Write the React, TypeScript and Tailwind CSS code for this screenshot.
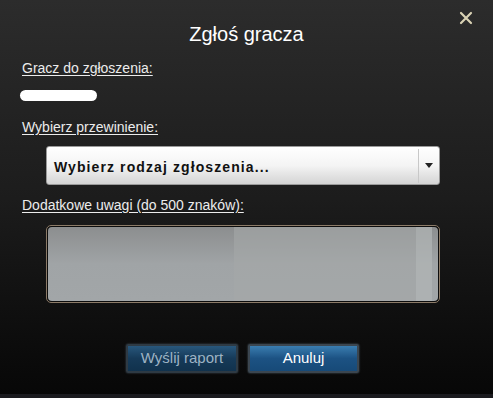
export default function App() {
  return (
    <div
      className="relative w-[493px] h-[398px] overflow-hidden bg-gradient-to-b from-[#2c2c2c] via-[#1c1c1c] to-[#070707] text-[#ececec]"
      style={{ fontFamily: '"Liberation Sans", Arial, sans-serif' }}
    >
      {/* Close */}
      <button className="absolute left-[458px] top-[10px] w-[16px] h-[16px] flex items-center justify-center">
        <svg width="14" height="14" viewBox="0 0 14 14">
          <path d="M2 2 L12 12 M12 2 L2 12" stroke="#d9d2b4" strokeWidth="2.2" strokeLinecap="round" />
        </svg>
      </button>

      <div className="flex flex-col h-[394px]">
        <h1 className="pt-[22px] text-center text-[20px] leading-[24px] text-white">Zgłoś gracza</h1>

        <div className="pl-[22px] pt-[14px] text-[14px] leading-[16px] underline underline-offset-2">
          Gracz do zgłoszenia:
        </div>
        <div className="ml-[20px] mt-[14px] w-[77px] h-[11px] rounded-full bg-white" />

        <div className="pl-[22px] pt-[18px] text-[14px] leading-[16px] underline underline-offset-2">
          Wybierz przewinienie:
        </div>

        {/* Select */}
        <div className="ml-[46px] mt-[11px] w-[394px] h-[39px] flex items-center rounded-[3px] border border-[#9a9a9a] bg-gradient-to-b from-[#ffffff] via-[#f4f4f4] to-[#d4d4d4] text-[#111]">
          <span className="flex-1 pl-[7px] pt-[4px] text-[14px] font-bold tracking-[1.1px]">
            Wybierz rodzaj zgłoszenia...
          </span>
          <div className="w-px h-[34px] bg-[#c8c8c8]" />
          <div className="w-[20px] flex justify-center">
            <svg width="8" height="5" viewBox="0 0 8 5">
              <path d="M0 0 H8 L4 5 Z" fill="#222" />
            </svg>
          </div>
        </div>

        <div className="pl-[22px] pt-[12px] text-[14px] leading-[16px] underline underline-offset-2">
          Dodatkowe uwagi (do 500 znaków):
        </div>

        {/* Textarea */}
        <div className="ml-[46px] mt-[12px] w-[394px] h-[78px] rounded-[5px] border border-[#8c7b68] bg-[#0d0d0d] p-px">
          <div className="w-full h-full rounded-[4px] bg-gradient-to-b from-[#8c8e8f] via-[#a0a4a6] to-[#a2a6a8] flex">
            <div className="w-[186px] h-full" />
            <div className="flex-1 h-full bg-[#a5a9a9]/60" />
            <div className="w-[16px] h-full bg-[#b2b6b6]/70" />
            <div className="w-[6px] h-full" />
          </div>
        </div>

        {/* Buttons */}
        <div className="mt-[41px] flex justify-center gap-[10px] pr-[8px]">
          <button className="w-[112px] h-[29px] rounded-[2px] border-2 border-[#2e3a44] bg-gradient-to-b from-[#28577c] via-[#163a58] to-[#11324d] text-[15px] text-[#9db3c4] shadow-[0_0_2px_#4a5560]">
            Wyślij raport
          </button>
          <button className="w-[111px] h-[29px] rounded-[2px] border-2 border-[#3b4650] bg-gradient-to-b from-[#3a7db0] via-[#1c5283] to-[#174a78] text-[15px] text-white shadow-[0_0_2px_#5a6670]">
            Anuluj
          </button>
        </div>
      </div>
      <div className="h-[4px] bg-[#1b1b1f]" />
    </div>
  );
}
